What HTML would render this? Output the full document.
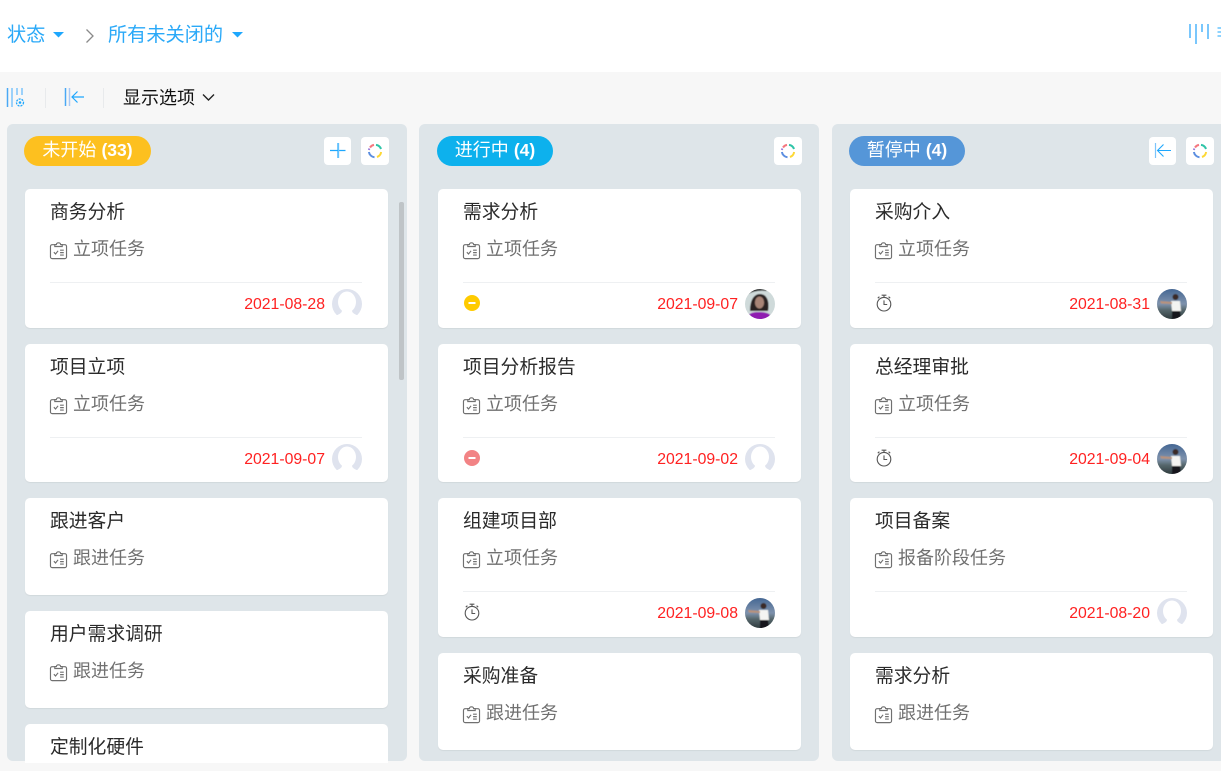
<!DOCTYPE html>
<html lang="zh">
<head>
<meta charset="utf-8">
<title>状态</title>
<style>
html,body{margin:0;padding:0;width:1221px;height:771px;overflow:hidden;background:#f7f7f7}
body{position:relative;font-family:"Liberation Sans","Noto Sans CJK SC",sans-serif}
.abs,.col,.card,.btn,.pill,.t,.s,.d,.line,.ic,.av,.st{position:absolute}
.top{position:absolute;left:0;top:0;width:1221px;height:72px;background:#fff}
.blue{color:#2aa9f8;font-size:19.2px;line-height:24px;white-space:nowrap}
.col{top:124px;height:637px;background:#dee5e9;border-radius:6px}
.pill{top:136px;height:30px;line-height:29px;border-radius:15px;color:#fff;font-size:18px;text-align:center;white-space:nowrap;font-weight:400}
.pill b{font-weight:700;font-size:17.500px}
.btn{top:137px;width:28px;height:28px;background:#fff;border-radius:4px}
.btn svg{display:block}
.card{width:363px;background:#fff;border-radius:5px;box-shadow:0 1px 1px rgba(0,0,0,.06);overflow:hidden}
.t{left:25px;top:10px;font-size:18.8px;line-height:26px;color:#2a2a2a;white-space:nowrap}
.s{left:48px;top:47px;font-size:18px;line-height:26px;color:#707070;white-space:nowrap}
.ic{left:24px;top:52px;width:19px;height:19px}
.line{left:25px;top:93px;width:312px;height:1px;background:#eef0f2}
.d{right:63px;top:105.500px;font-size:15.800px;line-height:20px;color:#ff2121;white-space:nowrap}
.av{left:307px;top:100px;width:30px;height:30px}
.st{left:25px;top:105px;width:18px;height:18px}
</style>
</head>
<body>
<svg width="0" height="0" style="position:absolute">
<defs>
<filter id="soft" x="-5%" y="-5%" width="110%" height="110%"><feGaussianBlur stdDeviation=".6"/></filter>
<symbol id="task" viewBox="0 0 18 18"><g fill="none" stroke="#707070" stroke-width="1.100"><path d="M5.500 3.500H3a1.600 1.600 0 0 0-1.600 1.600v10A1.600 1.600 0 0 0 3 16.700h12a1.600 1.600 0 0 0 1.600-1.600v-10A1.600 1.600 0 0 0 15 3.500h-2.500"/><path d="M5.500 5.200h7V3.400H11C10.800 1.200 7.200 1.200 7 3.400H5.500z"/><path d="M4.600 10.600l1.600 1.700 2.400-3"/><path d="M10.500 8.700h3.500M10.500 11h3.500M10.500 13.300h3.500"/></g></symbol>
<symbol id="clock" viewBox="0 0 18 18"><g fill="none" stroke="#555" stroke-width="1.100"><circle cx="9" cy="10.200" r="6.800"/><path d="M9 6.400v4.100h3.200"/><path d="M6.600 1.200h4.800M9 1.200v2.200M2.800 4.200l1.600-1.500M15.200 4.200l-1.600-1.500"/></g></symbol>
<symbol id="blank" viewBox="0 0 30 30"><clipPath id="bc"><circle cx="15" cy="15" r="15"/></clipPath><g clip-path="url(#bc)"><rect width="30" height="26" fill="#dfe3ee"/><ellipse cx="15" cy="13" rx="9" ry="10.500" fill="#fff"/><path d="M9.500 20c1.500 3-1 4.500-4 6h19c-3-1.500-5.500-3-4-6z" fill="#fff"/><rect y="26" width="30" height="4" fill="#fff"/></g></symbol>
<symbol id="man" viewBox="0 0 30 30"><defs><linearGradient id="mg" x1="0" y1="0" x2="0" y2="1"><stop offset="0" stop-color="#3d6190"/><stop offset=".5" stop-color="#7f93ad"/><stop offset=".68" stop-color="#56676c"/><stop offset="1" stop-color="#263234"/></linearGradient></defs><clipPath id="mc"><circle cx="15" cy="15" r="15"/></clipPath><g clip-path="url(#mc)"><g filter="url(#soft)"><rect x="-2" y="-2" width="34" height="34" fill="url(#mg)"/><path d="M14 12h9l1 10h-9z" fill="#f4f4f2"/><path d="M15 22h8l1 9h-9z" fill="#16181c"/><path d="M3 12l12 1v2l-11-.5z" fill="#b9927a"/><circle cx="18.500" cy="8" r="3" fill="#3a2c28"/></g></g></symbol>
<symbol id="woman" viewBox="0 0 30 30"><clipPath id="wc"><circle cx="15" cy="15" r="15"/></clipPath><g clip-path="url(#wc)"><g filter="url(#soft)"><rect x="-2" y="-2" width="34" height="34" fill="#cfdada"/><path d="M3 3C9-1 16-1 22 1v1C15 1 9 2 3 5z" fill="#1a1a1a"/><path d="M5 22C5 11 9 5 15 5s10 6 8 17z" fill="#2a2322"/><ellipse cx="14.500" cy="13.500" rx="4.600" ry="6" fill="#a88476"/><path d="M2 31c0-7 6-8 12-8s13 1 13 8z" fill="#8f1fb0"/></g></g></symbol>
<symbol id="ring" viewBox="0 0 28 28"><g fill="none" stroke-width="2"><path d="M9 10.500A6.200 6.200 0 0 1 13 7.900" stroke="#f5777f"/><path d="M15 7.900A6.200 6.200 0 0 1 20 12" stroke="#2fc4a8"/><path d="M20.100 15A6.200 6.200 0 0 1 16 20" stroke="#fdd835"/><path d="M13.500 20.200A6.200 6.200 0 0 1 7.900 15" stroke="#5b8ee0"/><path d="M7.900 13A6.200 6.200 0 0 1 8.400 11.500" stroke="#9a78d8"/></g></symbol>
<symbol id="back" viewBox="0 0 28 28"><path d="M6.500 6v15" stroke="#7cc4fb" stroke-width="1.200" fill="none"/><path d="M22 13.500H9M14.500 7.500l-6 6 6 6" stroke="#1ea7fd" stroke-width="1.100" fill="none"/></symbol>
</defs>
</svg>

<div class="top"></div>
<div class="abs blue" style="left:7px;top:23.500px">状态</div>
<svg class="abs" style="left:52.500px;top:32px" width="11" height="6"><path d="M0 0h11L5.500 5.500z" fill="#1ea7fd"/></svg>
<svg class="abs" style="left:84px;top:28px" width="11" height="16"><path d="M2.500 1.500l6.500 6.500-6.500 6.500" fill="none" stroke="#8a8a8a" stroke-width="1.300"/></svg>
<div class="abs blue" style="left:108px;top:23.500px">所有未关闭的</div>
<svg class="abs" style="left:231.500px;top:32px" width="11" height="6"><path d="M0 0h11L5.500 5.500z" fill="#1ea7fd"/></svg>
<svg class="abs" style="left:1188px;top:23px" width="33" height="21"><g stroke="#6cc1fc" stroke-width="1.800"><path d="M2 1v14M8 1v20M14 1v8M20 1v15"/></g><path d="M29.500 5h4M29.500 9h4M29.500 13h4" stroke="#1ea7fd" stroke-width="1"/></svg>

<svg class="abs" style="left:6px;top:87px" width="20" height="21"><g stroke-width="1.500"><path d="M1.500 1v19" stroke="#4aa8f5"/><path d="M6 1v19" stroke="#7cc4fb"/><path d="M11 1v7" stroke="#7cc4fb"/><path d="M16 1v7" stroke="#7cc4fb"/></g><circle cx="14" cy="15.500" r="3.500" fill="none" stroke="#1ea7fd" stroke-width="1.300" stroke-dasharray="2 1"/><circle cx="14" cy="15.500" r="1.300" fill="#1ea7fd"/></svg>
<div class="abs" style="left:45px;top:88px;width:1px;height:20px;background:#e8eaec"></div>
<svg class="abs" style="left:64px;top:87px" width="22" height="20"><path d="M1.500 1v18" stroke="#4aa8f5" stroke-width="1.500"/><path d="M5.500 1v18" stroke="#a9c8f5" stroke-width="1.500"/><path d="M20 10H8M13.500 4.500L8 10l5.500 5.500" stroke="#1ea7fd" stroke-width="1.200" fill="none"/></svg>
<div class="abs" style="left:103px;top:88px;width:1px;height:20px;background:#e8eaec"></div>
<div class="abs" style="left:123px;top:86px;font-size:18px;line-height:24px;color:#111;white-space:nowrap">显示选项</div>
<svg class="abs" style="left:202px;top:93px" width="13" height="9"><path d="M1 1.500l5.500 5.500L12 1.500" fill="none" stroke="#222" stroke-width="1.400"/></svg>

<div class="col" style="left:7px;width:400px"></div>
<div class="col" style="left:419px;width:400px"></div>
<div class="col" style="left:832px;width:400px"></div>
<div class="abs" style="left:399px;top:202px;width:5px;height:178px;background:#bfc4c7;border-radius:2px"></div>

<div class="pill" style="left:24px;width:127px;background:#fdc01f">未开始 <b>(33)</b></div>
<div class="btn" style="left:324px;width:27px"><svg width="28" height="28"><path d="M14 6v15M6 13.500h15.500" stroke="#1ea7fd" stroke-width="1.200"/><path d="M14.800 6v15" stroke="#8fd0fc" stroke-width=".8"/></svg></div>
<div class="btn" style="left:361px"><svg width="28" height="28"><use href="#ring"/></svg></div>

<div class="pill" style="left:437px;width:116px;background:#0db1ed">进行中 <b>(4)</b></div>
<div class="btn" style="left:774px"><svg width="28" height="28"><use href="#ring"/></svg></div>

<div class="pill" style="left:849px;width:116px;background:#5596d8">暂停中 <b>(4)</b></div>
<div class="btn" style="left:1149px;width:27px"><svg width="28" height="28"><use href="#back"/></svg></div>
<div class="btn" style="left:1186px"><svg width="28" height="28"><use href="#ring"/></svg></div>

<!-- column 1 -->
<div class="card" style="left:25px;top:189px;height:139px"><div class="t">商务分析</div><svg class="ic"><use href="#task"/></svg><div class="s">立项任务</div><div class="line"></div><div class="d">2021-08-28</div><svg class="av"><use href="#blank"/></svg></div>
<div class="card" style="left:25px;top:344px;height:138px"><div class="t">项目立项</div><svg class="ic"><use href="#task"/></svg><div class="s">立项任务</div><div class="line"></div><div class="d">2021-09-07</div><svg class="av"><use href="#blank"/></svg></div>
<div class="card" style="left:25px;top:498px;height:97px"><div class="t">跟进客户</div><svg class="ic"><use href="#task"/></svg><div class="s">跟进任务</div></div>
<div class="card" style="left:25px;top:611px;height:97px"><div class="t">用户需求调研</div><svg class="ic"><use href="#task"/></svg><div class="s">跟进任务</div></div>
<div class="card" style="left:25px;top:724px;height:39px;border-radius:5px 5px 0 0;box-shadow:none"><div class="t">定制化硬件</div></div>

<!-- column 2 -->
<div class="card" style="left:438px;top:189px;height:139px"><div class="t">需求分析</div><svg class="ic"><use href="#task"/></svg><div class="s">立项任务</div><div class="line"></div><svg class="st"><circle cx="9" cy="9" r="8" fill="#ffcb00"/><path d="M5.500 9h7" stroke="#fff" stroke-width="2"/></svg><div class="d">2021-09-07</div><svg class="av"><use href="#woman"/></svg></div>
<div class="card" style="left:438px;top:344px;height:138px"><div class="t">项目分析报告</div><svg class="ic"><use href="#task"/></svg><div class="s">立项任务</div><div class="line"></div><svg class="st"><circle cx="9" cy="9" r="8" fill="#f28385"/><path d="M5.500 9h7" stroke="#fff" stroke-width="2"/></svg><div class="d">2021-09-02</div><svg class="av"><use href="#blank"/></svg></div>
<div class="card" style="left:438px;top:498px;height:139px"><div class="t">组建项目部</div><svg class="ic"><use href="#task"/></svg><div class="s">立项任务</div><div class="line"></div><svg class="st"><use href="#clock"/></svg><div class="d">2021-09-08</div><svg class="av"><use href="#man"/></svg></div>
<div class="card" style="left:438px;top:653px;height:97px"><div class="t">采购准备</div><svg class="ic"><use href="#task"/></svg><div class="s">跟进任务</div></div>

<!-- column 3 -->
<div class="card" style="left:850px;top:189px;height:139px"><div class="t">采购介入</div><svg class="ic"><use href="#task"/></svg><div class="s">立项任务</div><div class="line"></div><svg class="st"><use href="#clock"/></svg><div class="d">2021-08-31</div><svg class="av"><use href="#man"/></svg></div>
<div class="card" style="left:850px;top:344px;height:138px"><div class="t">总经理审批</div><svg class="ic"><use href="#task"/></svg><div class="s">立项任务</div><div class="line"></div><svg class="st"><use href="#clock"/></svg><div class="d">2021-09-04</div><svg class="av"><use href="#man"/></svg></div>
<div class="card" style="left:850px;top:498px;height:139px"><div class="t">项目备案</div><svg class="ic"><use href="#task"/></svg><div class="s">报备阶段任务</div><div class="line"></div><div class="d">2021-08-20</div><svg class="av"><use href="#blank"/></svg></div>
<div class="card" style="left:850px;top:653px;height:97px"><div class="t">需求分析</div><svg class="ic"><use href="#task"/></svg><div class="s">跟进任务</div></div>
</body>
</html>
